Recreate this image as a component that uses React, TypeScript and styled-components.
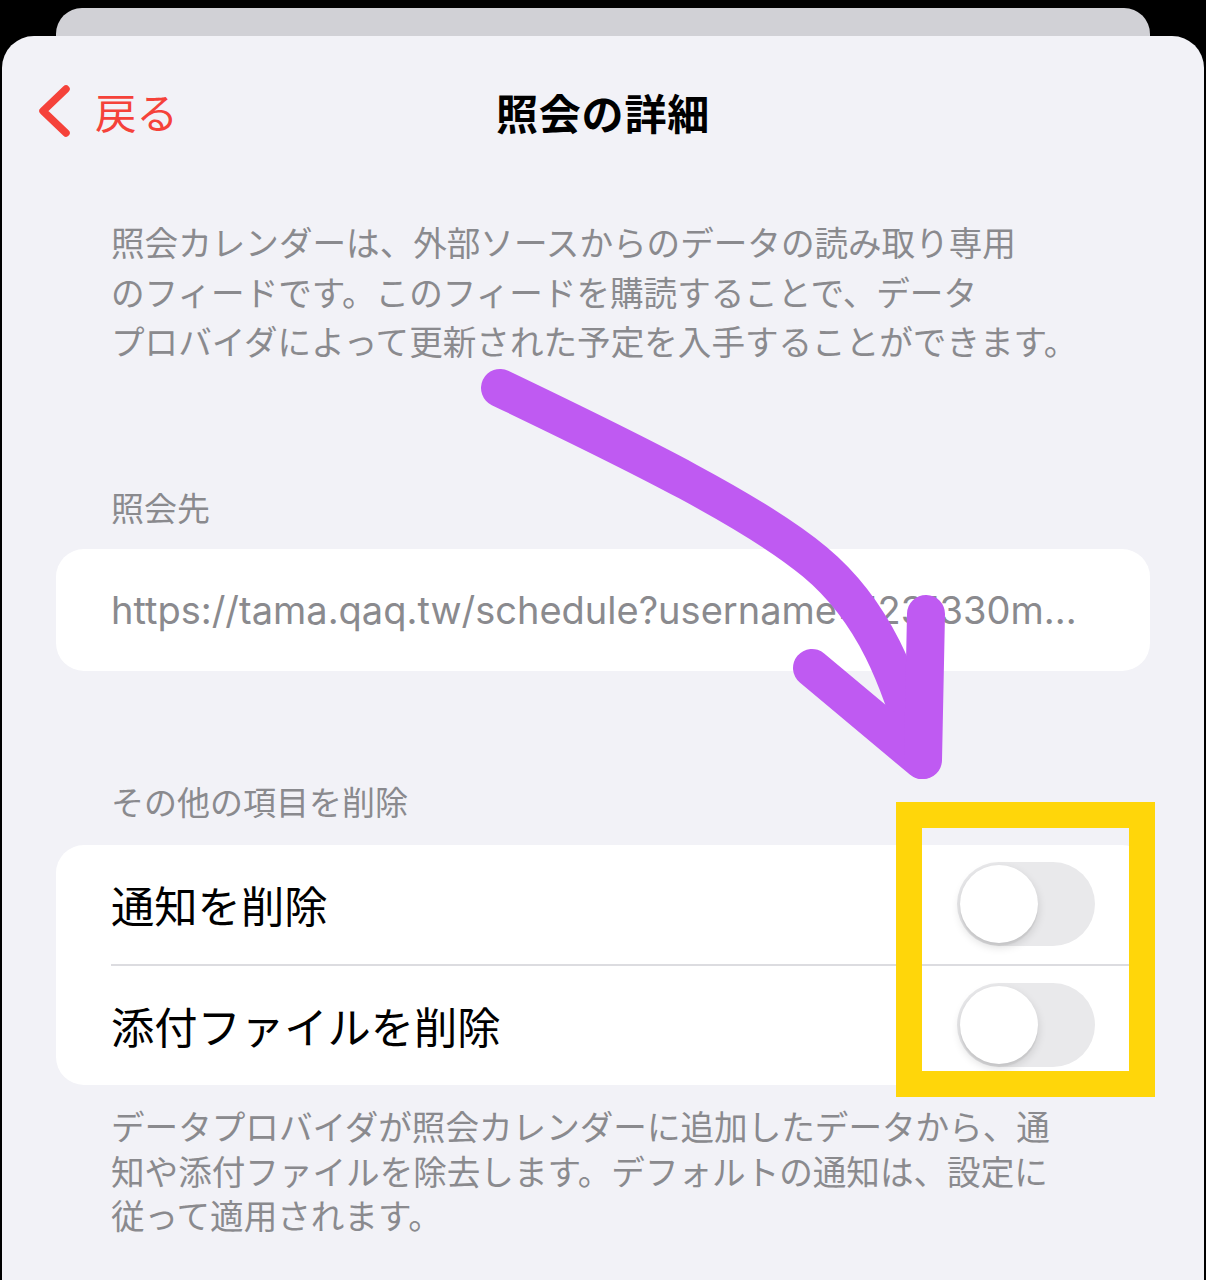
import React from "react";
import styled, { createGlobalStyle } from "styled-components";

const GlobalStyle = createGlobalStyle`
  html, body {
    margin: 0;
    padding: 0;
    background: #000;
  }
  body {
    font-family: "Noto Sans CJK JP", "Noto Sans", sans-serif;
    -webkit-font-smoothing: antialiased;
  }
  * { box-sizing: border-box; }
`;

const Page = styled.div`
  position: relative;
  width: 1206px;
  height: 1280px;
  overflow: hidden;
  background: #000;
  display: flex;
  flex-direction: column;
`;

const BackSheet = styled.div`
  margin: 8px 56px 0;
  height: 28px;
  flex: none;
  background: #d1d1d6;
  border-radius: 26px 26px 0 0;
`;

const Sheet = styled.div`
  flex: 1;
  margin: 0 2px;
  background: #f2f2f7;
  border-radius: 32px 32px 0 0;
  padding: 27px 54px 0;
  display: flex;
  flex-direction: column;
`;

const NavBar = styled.div`
  height: 96px;
  margin: 0 -54px;
  display: grid;
  grid-template-columns: 1fr auto 1fr;
  align-items: center;
`;

const BackButton = styled.div`
  display: flex;
  align-items: center;
  gap: 22px;
  padding-left: 35px;
  color: #f5423a;
  font-size: 41.5px;
  line-height: 54px;
`;

const Title = styled.div`
  font-size: 42px;
  font-weight: 700;
  color: #000;
  letter-spacing: 0.8px;
`;

const Description = styled.p<{ $lh: number; $top: number }>`
  margin: ${(p) => p.$top}px 0 0;
  padding-left: 55px;
  font-size: 33.6px;
  line-height: ${(p) => p.$lh}px;
  color: #8a8a8e;
  white-space: nowrap;
`;

const SectionLabel = styled.div<{ $top: number }>`
  margin-top: ${(p) => p.$top}px;
  padding-left: 55px;
  font-size: 33px;
  line-height: 40px;
  color: #8a8a8e;
`;

const Card = styled.div<{ $top: number }>`
  margin-top: ${(p) => p.$top}px;
  background: #fff;
  border-radius: 28px;
  overflow: hidden;
`;

const UrlRow = styled.div`
  height: 122px;
  display: flex;
  align-items: center;
  padding: 0 55px;
  font-family: "Inter", "Liberation Sans", sans-serif;
  font-size: 38px;
  color: #8a8a8e;
  white-space: nowrap;
`;

const ToggleRow = styled.div`
  height: 119.5px;
  display: flex;
  align-items: center;
  justify-content: space-between;
  padding: 0 55px;
  font-size: 43.3px;
  color: #000;
`;

const Separator = styled.div`
  height: 1.5px;
  margin-left: 55px;
  background: #dcdce0;
`;

const Track = styled.div`
  position: relative;
  width: 138px;
  height: 84px;
  border-radius: 42px;
  background: #e9e9eb;
  flex: none;
`;

const Knob = styled.div`
  position: absolute;
  left: 3px;
  top: 3px;
  width: 78px;
  height: 78px;
  border-radius: 50%;
  background: #fff;
  box-shadow: 0 4px 10px rgba(0, 0, 0, 0.14), 0 3px 1px rgba(0, 0, 0, 0.05);
`;

const Highlight = styled.div`
  position: absolute;
  left: 896px;
  top: 802px;
  width: 259px;
  height: 295px;
  border: 26px solid #ffd60a;
  pointer-events: none;
`;

const ArrowLayer = styled.svg`
  position: absolute;
  left: 0;
  top: 0;
  pointer-events: none;
`;

const Toggle = () => (
  <Track>
    <Knob />
  </Track>
);

export default function App() {
  return (
    <>
      <GlobalStyle />
      <Page>
        <BackSheet />
        <Sheet>
          <NavBar>
            <BackButton>
              <svg width="36" height="54" viewBox="0 0 36 54">
                <path
                  d="M29 5 L6 27 L29 49"
                  fill="none"
                  stroke="#f5423a"
                  strokeWidth="7.5"
                  strokeLinecap="round"
                  strokeLinejoin="round"
                />
              </svg>
              <span>戻る</span>
            </BackButton>
            <Title>照会の詳細</Title>
            <div />
          </NavBar>

          <Description $lh={49.5} $top={58}>
            照会カレンダーは、外部ソースからのデータの読み取り専用
            <br />
            のフィードです。このフィードを購読することで、データ
            <br />
            プロバイダによって更新された予定を入手することができます。
          </Description>

          <SectionLabel $top={121}>照会先</SectionLabel>
          <Card $top={22}>
            <UrlRow>https://tama.qaq.tw/schedule?username=1231330m...</UrlRow>
          </Card>

          <SectionLabel $top={110}>その他の項目を削除</SectionLabel>
          <Card $top={24}>
            <ToggleRow>
              <span>通知を削除</span>
              <Toggle />
            </ToggleRow>
            <Separator />
            <ToggleRow>
              <span>添付ファイルを削除</span>
              <Toggle />
            </ToggleRow>
          </Card>

          <Description $lh={44.5} $top={19}>
            データプロバイダが照会カレンダーに追加したデータから、通
            <br />
            知や添付ファイルを除去します。デフォルトの通知は、設定に
            <br />
            従って適用されます。
          </Description>
        </Sheet>

        <ArrowLayer width="1206" height="1280" viewBox="0 0 1206 1280">
          <g
            fill="none"
            stroke="#bf5af2"
            strokeWidth="38"
            strokeLinecap="round"
            strokeLinejoin="round"
          >
            <path d="M500 388 C 640 455, 755 512, 815 562 S 900 680, 922 758" />
            <path d="M812 668 L 922 760" />
            <path d="M926 614 L 923 760" />
          </g>
        </ArrowLayer>
        <Highlight />
      </Page>
    </>
  );
}
